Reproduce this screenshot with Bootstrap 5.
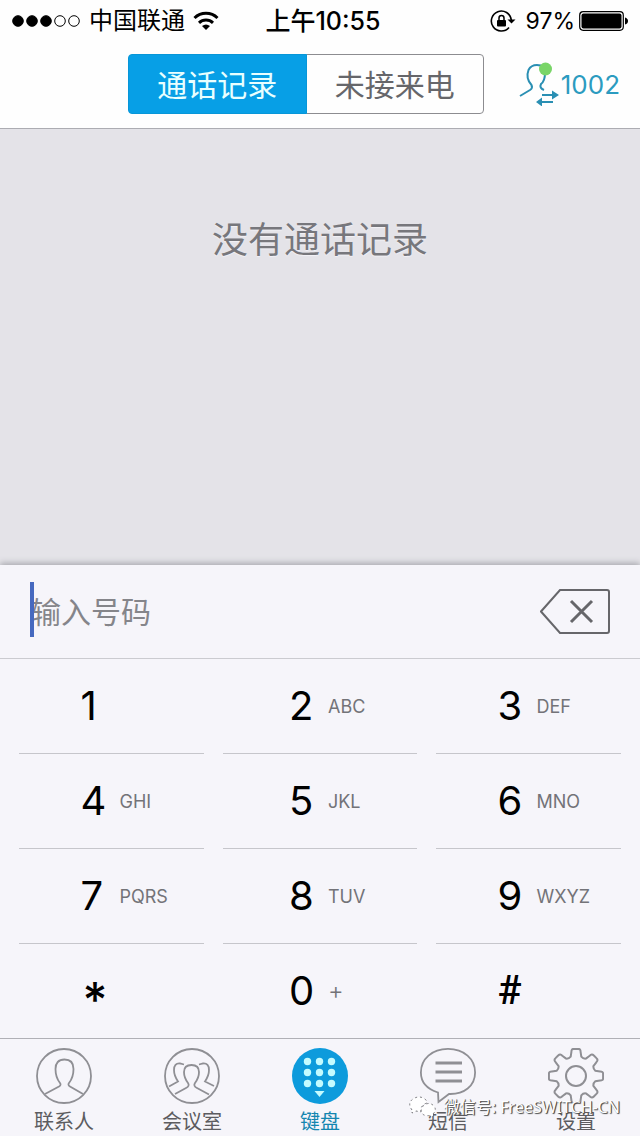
<!DOCTYPE html>
<html lang="zh-CN">
<head>
<meta charset="utf-8">
<meta name="viewport" content="width=device-width, initial-scale=1">
<title>键盘</title>
<link href="https://cdn.jsdelivr.net/npm/bootstrap@5.3.0/dist/css/bootstrap.min.css" rel="stylesheet">
<style>
body { font-family: Inter, "Noto Sans CJK SC", sans-serif; background: #fefefe; color: #000; }
.status-bar { height: 41px; font-size: 24px; line-height: 40px; padding: 0 12px; }
.status-time { font-size: 25px; font-weight: 500; padding-left: 6px; }
.status-level { font-size: 23px; }
.top-bar { padding: 13px 20px 14px 20%; gap: 35px; border-bottom: 1px solid #acacb2; }
.switcher .btn { --bs-btn-border-radius: 4px; --bs-btn-border-color: #8c8c90; --bs-btn-color: #66666a; --bs-btn-active-bg: #079fe6; --bs-btn-active-color: #e9ffff; --bs-btn-active-border-color: #0796d8;
  height: 60px; padding: 0; font-size: 30px; line-height: 60px; }
.account { width: 101px; color: #2b9bc0; font-size: 26px; }
.history { background: #e4e3e8; padding-top: 87px; }
.history p { font-size: 36px; line-height: 48px; color: #77777c; text-shadow: 0 1px 1px #f3f2f7; }
.dialer { background: #f6f5fa; box-shadow: 0 -2px 6px #a9a9af; }
.number-row { height: 94px; padding: 0 30px; border-bottom: 1px solid #cbcbd0; }
.number-row .form-control { font-size: 30px; line-height: 44px; padding: 0 1px; background: none; border: 0; }
.number-row .form-control::placeholder { color: #85858a; opacity: 1; }
.caret { left: 30px; top: 17px; width: 4px; height: 55px; background: #4669bf; }
.keys { display: grid; grid-template-columns: 185fr 194fr 185fr; column-gap: 19px; padding: 0 19px; }
.key { height: 95px; padding: 0; border: 0; border-bottom: 1px solid #c6c6cb; background: none; color: #000; }
.key:nth-last-child(-n+3) { height: 94px; border: 0; }
.key b { width: 39px; font-size: 40px; line-height: 94px; font-weight: 400; text-align: left; }
.key span { width: 23px; font-size: 18px; color: #737378; white-space: nowrap; text-align: left; }
.key .plus { font-size: 24px; font-weight: 300; }
.key .star { font-size: 48px; font-weight: 500; line-height: 76px; padding: 18px 0 0 2px; }
.key .hash { font-family: Roboto, sans-serif; font-weight: 500; }
.tabs { background: #f6f5fa; border-top: 1px solid #b0b0b6; }
.tabs a { padding-top: 9px; color: #5c5c60; font-size: 20px; line-height: 32px; text-decoration: none; }
.tabs a.active { color: #1486b0; }
.tabs svg { display: block; margin: 0 auto; }
.tabs a span { display: block; height: 32px; line-height: 36px; }
.watermark { right: 20px; bottom: 16px; font-family: "Noto Sans", "Noto Sans CJK SC", sans-serif; font-size: 16px; line-height: 26px; color: #fff; text-shadow: 1px 1px 1px #444, 1px 0 0 #77777b; }
</style>
</head>
<body class="d-flex flex-column min-vh-100">
<header>
  <div class="status-bar d-flex align-items-center justify-content-between position-relative">
    <div class="d-flex align-items-center gap-2">
      <svg width="69" height="14" viewBox="0 0 69 14"><g stroke="#000"><circle cx="6" cy="7" r="5.3"/><circle cx="20" cy="7" r="5.3"/><circle cx="34" cy="7" r="5.3"/><g fill="none"><circle cx="48" cy="7" r="5.3"/><circle cx="62" cy="7" r="5.3"/></g></g></svg>
      <span>中国联通</span>
      <svg width="26" height="20" viewBox="0 0 26 20" fill="none" stroke="#000" stroke-width="3"><path d="M1.5 7a16.500 16.500 0 0 1 23 0M6 11.800a10.300 10.300 0 0 1 14 0"/><path d="M9 15q4-3 8 0l-4 4z" fill="#000" stroke="none"/></svg>
    </div>
    <div class="status-time position-absolute start-50 translate-middle-x">上午10:55</div>
    <div class="d-flex align-items-center">
      <svg class="me-2" width="28" height="24" viewBox="0 0 28 24"><path d="M19 18.500A10 10 0 1 1 21.300 11" fill="none" stroke="#000" stroke-width="1.600"/><path d="M17.500 10.500h8l-4 4z"/><rect x="7" y="11" width="9" height="6.500" rx="1"/><path d="M9 12V9a2.500 2.500 0 0 1 5 0v3" fill="none" stroke="#000" stroke-width="1.500"/></svg>
      <span class="status-level">97%</span>
      <svg class="ms-1" width="49" height="20" viewBox="0 0 49 20"><rect x=".7" y=".7" width="43.600" height="18.600" rx="3.500" fill="none" stroke="#000" stroke-width="1.200"/><rect x="2.500" y="2.500" width="40" height="15" rx="2"/><path d="M46 6.500q3 1 3 3.500t-3 3.500z"/></svg>
    </div>
  </div>
  <div class="top-bar d-flex align-items-center">
    <div class="switcher btn-group flex-grow-1">
      <button type="button" class="btn active w-50">通话记录</button>
      <button type="button" class="btn w-50">未接来电</button>
    </div>
    <a href="#" class="account d-flex align-items-center justify-content-between text-decoration-none flex-shrink-0">
      <svg width="40" height="44" viewBox="0 0 40 44" fill="none" stroke="#2a8fb3" stroke-width="2"><path d="M1 34L11 28Q14 26 12.500 23C8 18 8 12 9.500 8Q12 3 18 3Q26 3 26 11Q26 19 22 22Q20 26 25 28"/><path d="M23 33h12M21 40h13"/><path d="M33 28.500l7 4.500-7 4.500zM23 35.500l-6 4.500 6 4.500z" fill="#2a8fb3" stroke="none"/><circle cx="26.500" cy="7" r="6.500" fill="#79d568" stroke="none"/></svg>
      <span>1002</span>
    </a>
  </div>
</header>
<main class="history flex-grow-1 text-center">
  <p class="m-0">没有通话记录</p>
</main>
<section class="dialer position-relative">
  <div class="number-row d-flex align-items-center">
    <input type="tel" class="form-control shadow-none" placeholder="输入号码" aria-label="输入号码">
    <span class="caret position-absolute"></span>
    <button type="button" class="btn p-0 border-0 flex-shrink-0" aria-label="删除"><svg class="d-block" width="70" height="48" viewBox="0 0 70 48" fill="none" stroke="#66666a" stroke-width="2"><path d="M20 2H67Q69 2 69 4V43Q69 45 67 45H20L1 23.500z"/><path d="M31 13L52 34M52 13L31 34" stroke-width="3"/></svg></button>
  </div>
  <div class="keys">
    <button type="button" class="key d-flex justify-content-center align-items-center"><b>1</b><span></span></button>
    <button type="button" class="key d-flex justify-content-center align-items-center"><b>2</b><span>ABC</span></button>
    <button type="button" class="key d-flex justify-content-center align-items-center"><b>3</b><span>DEF</span></button>
    <button type="button" class="key d-flex justify-content-center align-items-center"><b>4</b><span>GHI</span></button>
    <button type="button" class="key d-flex justify-content-center align-items-center"><b>5</b><span>JKL</span></button>
    <button type="button" class="key d-flex justify-content-center align-items-center"><b>6</b><span>MNO</span></button>
    <button type="button" class="key d-flex justify-content-center align-items-center"><b>7</b><span>PQRS</span></button>
    <button type="button" class="key d-flex justify-content-center align-items-center"><b>8</b><span>TUV</span></button>
    <button type="button" class="key d-flex justify-content-center align-items-center"><b>9</b><span>WXYZ</span></button>
    <button type="button" class="key d-flex justify-content-center align-items-center"><b class="star">*</b><span></span></button>
    <button type="button" class="key d-flex justify-content-center align-items-center"><b>0</b><span class="plus">+</span></button>
    <button type="button" class="key d-flex justify-content-center align-items-center"><b class="hash">#</b><span></span></button>
  </div>
</section>
<nav class="tabs d-flex text-center position-relative">
  <a href="#" class="col"><svg width="56" height="56" viewBox="0 0 56 56" fill="none" stroke="#8f8f94" stroke-width="1.800"><circle cx="28" cy="28" r="27"/><path d="M9 46L23 38.500Q25.500 37 24 35C20 30 19.500 26 19.500 21Q19.500 11.500 28.500 11.500T37.500 21C37.500 26 37 30 33 35Q31.500 37 34 38.500L47 46"/></svg><span>联系人</span></a>
  <a href="#" class="col"><svg width="56" height="56" viewBox="0 0 56 56" fill="none" stroke="#8f8f94" stroke-width="1.800"><circle cx="28" cy="28" r="27"/><path d="M11 46L22 40Q26 38 24 35C21 31 20 28 20 24Q20 17 27.500 17T35 24C35 28 34 31 31 35Q29 38 33 40L45 46.500M5 38.500L14 33.500C11 29 10 27 10 22Q10 15 16 15.500L20 16.500M50 38L41 33.500C44 29 45 27 45 22Q45 15 39 15.500L35 16.500"/></svg><span>会议室</span></a>
  <a href="#" class="col active" aria-current="page"><svg width="56" height="56" viewBox="0 0 56 56" fill="#c4fbff"><circle cx="28" cy="28" r="28" fill="#0d9bdc"/><circle cx="15.500" cy="13.500" r="3.700"/><circle cx="27.500" cy="13.500" r="3.700"/><circle cx="39.500" cy="13.500" r="3.700"/><circle cx="15.500" cy="24.500" r="3.700"/><circle cx="27.500" cy="24.500" r="3.700"/><circle cx="39.500" cy="24.500" r="3.700"/><circle cx="15.500" cy="35.500" r="3.700"/><circle cx="27.500" cy="35.500" r="3.700"/><circle cx="39.500" cy="35.500" r="3.700"/><path d="M22.500 43h10l-5 6z"/></svg><span>键盘</span></a>
  <a href="#" class="col"><svg width="56" height="56" viewBox="0 0 56 56" fill="none" stroke="#8f8f94" stroke-width="1.800"><path d="M18 44.500C7 41 .9 34 .9 24.500C.9 11 12 .9 28 .9S55.100 11 55.100 24.500S44 46.500 29 46L18.500 54z"/><path d="M15.500 15H42M15.500 24H42M15.500 33H42" stroke-width="3.200"/></svg><span>短信</span></a>
  <a href="#" class="col"><svg width="56" height="56" viewBox="0 0 56 56" fill="none" stroke="#8f8f94" stroke-width="2"><path id="gear" stroke-linejoin="round"/><circle cx="28" cy="28" r="10"/></svg><span>设置</span></a>
  <div class="watermark position-absolute d-flex align-items-center gap-2 pe-none">
    <svg width="27" height="22" viewBox="0 0 27 22" fill="#fff" stroke="#77777b" stroke-width="1" stroke-dasharray="2 3"><path d="M3 14Q-2 7 4 3Q10-1 16 3Q18 5 18 7Q11 9 12 16L7 15L3 17z"/><path d="M24 18Q28 14 25 10Q20 5 14 10Q10 16 15 19Q18 20 21 19.500L24 21z"/></svg>
    <span>微信号: FreeSWITCH-CN</span>
  </div>
</nav>
<script src="https://cdn.jsdelivr.net/npm/bootstrap@5.3.0/dist/js/bootstrap.bundle.min.js"></script>
<script>
// Eight-toothed gear outline: each tooth is a rounded bump between two valleys.
const at = (r, a) => (28 + r * Math.sin(a)).toFixed(1) + ' ' + (28 - r * Math.cos(a)).toFixed(1);
let d = '';
for (let i = 0; i < 8; i++) {
  const a = i * Math.PI / 4;
  d += (i ? 'L' : 'M') + at(20, a - .27) + 'L' + at(24.500, a - .19) + 'Q' + at(27.500, a - .17) + ' ' + at(27.200, a - .08)
     + 'L' + at(27.200, a + .08) + 'Q' + at(27.500, a + .17) + ' ' + at(24.500, a + .19) + 'L' + at(20, a + .27)
     + 'Q' + at(18.500, a + Math.PI / 8) + ' ' + at(20, a + Math.PI / 4 - .27);
}
document.getElementById('gear').setAttribute('d', d + 'z');
</script>
</body>
</html>
